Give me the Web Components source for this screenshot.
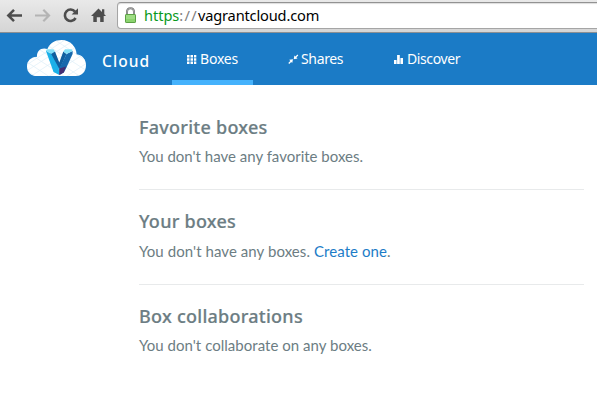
<!DOCTYPE html>
<html lang="en"><head><meta charset="utf-8"><title>Vagrant Cloud</title>
<style>html,body{margin:0;background:#fff;height:418px;overflow:hidden}body{font-family:"Noto Sans","Open Sans",sans-serif}</style></head>
<body>
<browser-bar></browser-bar>
<site-header>
  <nav-item icon="grid" active style="--w:81px;--ls:-.2px">Boxes</nav-item>
  <nav-item icon="share" style="--w:84px;--ls:-.35px;--gap:2px">Shares</nav-item>
  <nav-item icon="chart" style="--w:96px;--ls:-.4px">Discover</nav-item>
</site-header>
<box-list>
  <box-section heading="Favorite boxes" style="--top:19px;--mid:5px">You don't have any favorite boxes.</box-section>
  <box-section heading="Your boxes" style="--top:18px;--mid:6px;--ls:.07px">You don't have any boxes. <a href="#">Create one</a>.</box-section>
  <box-section heading="Box collaborations" style="--top:18px;--mid:5px;--ls:.03px">You don't collaborate on any boxes.</box-section>
</box-list>
<script>
const define=(name,html,setup)=>customElements.define(name,class extends HTMLElement{
  constructor(){super();const t=document.createElement('template');t.innerHTML=html;
    this.attachShadow({mode:'open'}).append(t.content.cloneNode(true));}
  connectedCallback(){if(setup)setup(this,this.shadowRoot);}
});
define('browser-bar',`<style>
:host{display:flex;box-sizing:border-box;height:33px;background:linear-gradient(#e9e9e9,#d5d5d5);border-bottom:1px solid #8b8f93;overflow:hidden}
.icons{width:117px;flex:none;height:32px}
.url{flex:1;height:25px;margin-top:2px;margin-right:-6px;border:1px solid #a5a5a5;border-top-color:#929292;border-radius:4px;background:#fff;display:flex;align-items:flex-start;box-shadow:inset 0 1px 1px #ddd}
.lock{margin:4px 0 0 6px;width:13px;height:17px;flex:none}
.text{font:14.6px/25px "Noto Sans",sans-serif;margin:0 0 0 7px;white-space:pre;color:#000}
.s{color:#0a9a1c;letter-spacing:-.05px}.g{color:#808080;letter-spacing:1.3px}.h{letter-spacing:-.16px}
</style>
<svg class="icons" viewBox="0 0 117 32" fill="none">
<g stroke-width="2.5"><path stroke="#4d4d4d" d="M8.5 15.5H22M14 9.8L8.3 15.5L14 21.2"/><path stroke="#b4b4b4" stroke-width="2.2" d="M35 15.5H48.5M43.3 9.8L49 15.5L43.3 21.2"/>
<path stroke="#4d4d4d" stroke-width="2.6" d="M75 11.6A5.7 5.7 0 1 0 75.6 18"/></g><path fill="#4d4d4d" d="M78 8.2V14.6H71.6Z"/>
<path fill="#4d4d4d" d="M98.5 8.6L102 12V9.2H104.3V14.2L106 16H103.7V22H100.2V17.3H96.8V22H93.3V16H91Z"/></svg>
<div class="url"><svg class="lock" viewBox="0 0 13 17"><path d="M3 8V5Q3 1.2 6.5 1.2Q10 1.2 10 5V8" fill="none" stroke="#777" stroke-width="2"/><path d="M3 8V5Q3 1.2 6.5 1.2Q10 1.2 10 5V8" fill="none" stroke="#bbb" stroke-width=".7"/><rect x="1.5" y="7.5" width="10" height="8" rx=".6" fill="#8bd36e" stroke="#5aa044"/><path d="M2 9H11M2 11H11" stroke="#b0e598"/></svg>
<div class="text"><span class="s">https</span><span class="g">://</span><span class="h">vagrantcloud.com</span></div></div>`);
define('cloud-logo',`<style>:host{display:block;width:60px;height:37px}svg{display:block}</style>
<svg width="60" height="37" viewBox="0 0 60 37"><defs><clipPath id="c"><path d="M10 36C3.5 36 0 31.7 0 26.4C0 20.8 4 17 10 16.8C9.5 10.8 14.5 7 20.4 9C23 3 28 0 34.6 0C43.2 0 49.4 6.5 49.6 14.5C55.5 15 59 19.5 59 25.2C59 31.5 55 36 48.6 36Z"/></clipPath></defs>
<g clip-path="url(#c)"><path fill="#fff" d="M0 0H60V37H0Z"/><g stroke="#dceef8" stroke-width=".7" fill="none"><path d="M0 22L38 47M3 14L52 46M10 8L60 41M20 5L60 31M28 0L60 21M0 31L14 40M-2 26L44 -4M-2 40L60 0M10 44L60 12M28 44L60 23M-2 32L52 -3"/></g>
<path fill="#115f9f" d="M22.5 13.5L28 11.5L32.3 22.5L36.3 11.5L39.5 14L33 28.5H30Z"/>
<path fill="#1bb0e8" d="M18.8 10.5L24.2 14L31.8 28L32.3 35L26.5 32Z"/>
<path fill="#83e0f8" d="M18.8 10.5L20 9.3H26.5L28 11.5L24.2 14Z"/>
<path fill="#1668ad" d="M39.5 14L45.6 11V14L39 28.5L36.8 32.5L32.3 35V28.5Z"/>
<path fill="#83e0f8" d="M36.3 11.5L38 9.3H44.6L45.6 11L39.5 14Z"/>
<path fill="#462d72" d="M32.3 28.5L39 26.5L36.8 32.5L32.3 35Z"/></g></svg>`);
define('site-header',`<style>
:host{display:flex;height:52px;background:#1b7bc6;color:#fff}
cloud-logo{margin:7px 0 0 27px;flex:none}
.name{font:500 15.5px/20px "Noto Sans",sans-serif;letter-spacing:1.1px;margin:18px 0 0 15px;width:70px;flex:none;white-space:nowrap}
nav{display:flex;gap:21px}
</style><cloud-logo></cloud-logo><div class="name">Cloud</div><nav><slot></slot></nav>`);
define('nav-item',`<style>
:host{display:flex;box-sizing:border-box;width:var(--w);height:52px;padding:0 13px 0 14px;border-bottom:5px solid transparent;white-space:nowrap}
:host([active]){border-color:#45b2fc}
svg{width:11px;height:11px;margin:21px var(--gap,3px) 0 0;flex:none}
span{font:14px/20px "Noto Sans",sans-serif;margin-top:16px;letter-spacing:var(--ls)}
</style><svg viewBox="0 0 11 11" fill="#fff"></svg><span><slot></slot></span>`,(el,r)=>{
const p={grid:'M1 1h2.5v2.4H1zM4.5 1H7v2.4H4.5zM8 1h2.3v2.4H8zM1 4.3h2.5v2.4H1zM4.5 4.3H7v2.4H4.5zM8 4.3h2.3v2.4H8zM1 7.6h2.5V10H1zM4.5 7.6H7V10H4.5zM8 7.6h2.3V10H8z',
share:'M9.4 .5L10.3 1.4L8.4 3.3L9.5 4.4L5.7 5.2L6.4 1.4L7.5 2.5ZM1.2 5.8L5 5.2L4.2 9L3.2 7.9L1.2 10L.3 9.1L2.3 7Z',
chart:'M1 6h2.6v4H1zM4.1 1h2.7v9H4.1zM7.4 4h2.6v6H7.4z'};
r.querySelector('svg').innerHTML='<path d="'+p[el.getAttribute('icon')]+'"/>';});
define('box-list',`<style>:host{display:block;width:445px;margin-left:139px;padding-top:10px}</style><slot></slot>`);
define('box-section',`<style>
:host{display:block;box-sizing:border-box;height:95px;padding-top:var(--top);border-bottom:1px solid #e8eaeb;color:#6c7d83}
:host(:last-of-type){border-bottom:0}
h2{font:500 18px/26px "Noto Sans",sans-serif;letter-spacing:.26px;-webkit-text-stroke:.2px #6c7d83;margin:0;white-space:nowrap}
p{font:15px/22px "Lato",sans-serif;letter-spacing:var(--ls,0);margin:var(--mid) 0 0;white-space:nowrap}
::slotted(a){color:#1c7cc7;text-decoration:none}
</style><h2></h2><p><slot></slot></p>`,(el,r)=>{r.querySelector('h2').textContent=el.getAttribute('heading');});
</script></body></html>
